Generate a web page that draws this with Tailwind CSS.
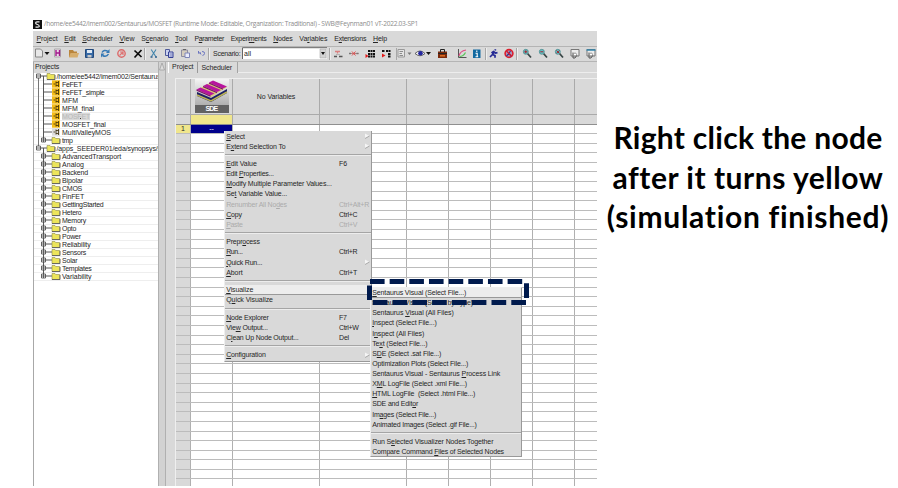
<!DOCTYPE html>
<html lang="en">
<head>
<meta charset="utf-8">
<title>Sentaurus Workbench</title>
<script src="https://cdn.jsdelivr.net/npm/@tailwindcss/browser@4"></script>
</head>
<body class="relative w-[898px] h-[488px] bg-white overflow-hidden font-['Liberation_Sans',Arial,sans-serif] text-[7px] leading-none text-[#262626]">
<div class="flex h-full pl-[33px] pt-[16px]">
  <section class="w-[564px] h-[470px] flex flex-col overflow-hidden shrink-0">
    <header class="h-[15px] flex items-center gap-[2px] pt-px shrink-0">
      <svg class="w-[9px] h-[9px]" viewBox="0 0 9 9"><rect width="9" height="9" fill="#111"/><path d="M6.500 1.800H4Q2.600 1.800 2.600 3t1.700 1.500T6.200 6 4.700 7.200H2.500" stroke="#eee" stroke-width="1.200" fill="none"/></svg>
      <span data-w="374" data-font="6.6px 'Open Sans'" class="font-['Open_Sans',sans-serif] text-[6.600px] text-[#8c8c8c]">/home/ee5442/imem002/Sentaurus/MOSFET (Runtime Mode: Editable, Organization: Traditional) - SWB@Feynman01 vT-2022.03-SP1</span>
    </header>
    <nav class="h-[15px] bg-[#d9d9d9] flex items-center pl-[3.500px] pb-px gap-[6.800px] shrink-0">
      <span data-w="21"><u>P</u>roject</span><span data-w="11"><u>E</u>dit</span><span data-w="30.5"><u>S</u>cheduler</span><span data-w="15"><u>V</u>iew</span><span data-w="27">S<u>c</u>enario</span><span data-w="12.500"><u>T</u>ool</span><span data-w="29.500">P<u>a</u>rameter</span><span data-w="35.700">Experi<u>m</u>ents</span><span data-w="19.300"><u>N</u>odes</span><span data-w="28">Va<u>r</u>iables</span><span data-w="32">E<u>x</u>tensions</span><span data-w="14"><u>H</u>elp</span>
    </nav>
    <div class="h-[15px] bg-[#d9d9d9] border-t border-[#b4b4b4] shrink-0">
      <svg class="block w-[564px] h-[14px]" viewBox="33 47 564 14" fill="none">
        <path d="M35.500 49h5l2 2v6h-7z" fill="#e8e8e8" stroke="#888"/><path d="M44.500 52h5l-2.500 3z" fill="#111"/>
        <path d="M54.500 49h6v8h-6z" fill="#eadbe8" stroke="#aaa"/><path d="M56 50v6M59.500 50v6M56 53h3.500" stroke="#a2188c" stroke-width="1.400"/>
        <path d="M69 50h4l1 1.500h3V57h-8z" fill="#b9853c"/><path d="M70.500 53H79l-1.500 4.500H69z" fill="#d6ad6c"/>
        <path d="M85.500 49.500h8v8h-8z" fill="#376aa6" stroke="#244a7c"/><path d="M87 50h5v3h-5z" fill="#dfe9f4"/><path d="M87.500 55h4v2.500h-4z" fill="#c8c8c8"/>
        <path d="M102 52.500q2-3.500 6-1.200M108.500 54q-2 3.500-6 1.500" stroke="#3478b5" stroke-width="1.500"/><path d="M109.500 49v4h-3.500zM101 57.500v-4h3.500z" fill="#3478b5"/>
        <circle cx="121.500" cy="53.500" r="3.700" stroke="#dc6a6a" stroke-width="1.400"/><path d="M119.500 55.500l4-4M120 52h3v3" stroke="#df7474" stroke-width="1.200"/>
        <path d="M134.500 50.500l7 6.500M141.500 50l-7 7.500" stroke="#0a0a0a" stroke-width="1.700"/>
        <path d="M151.200 49.500l4.500 7M156 49.500l-4.500 7" stroke="#4386ad" stroke-width="1.100"/><path d="M150.500 57h2M155 57h2" stroke="#2b5f8c" stroke-width="1.500"/>
        <path d="M165.500 49.500h4v6h-4z" fill="#c9d1ef" stroke="#4f5a9b"/><path d="M168.500 52h4.500v5.500h-4.500z" fill="#dfe3fa" stroke="#333f94"/><path d="M169.500 54h3M169.500 56h3" stroke="#333f94" stroke-width=".7"/>
        <path d="M181.500 50h6v6.500h-6z" fill="#d5cdbd" stroke="#8d8da2"/><path d="M183 49.500h3" stroke="#666"/><path d="M185 53h4.500v4.500H185z" fill="#eaecfb" stroke="#7e86b8"/>
        <path d="M198.500 53h2.500M198.500 51v2.500M200 52.500l1 2M202 51.500q3 0 2.500 2t-2 2" stroke="#6a74c0"/>
        <path d="M144.500 48v12M208.500 48v12M329.500 48v12M396.500 48v12M485.500 48v12M516.500 48v12" stroke="#a7a7a7"/>
        <path d="M145.500 48v12M209.500 48v12M330.500 48v12M486.500 48v12M517.500 48v12" stroke="#eee"/>
        <path d="M242 47.500h84.500V59H242z" fill="#fff"/><path d="M242.500 59V47.700H327" stroke="#666"/><path d="M320 49h6v9h-6z" fill="#d3d3d3" stroke="#aaa" stroke-width=".6"/><path d="M321 52h4l-2 3z" fill="#111"/>
        <path d="M335 51.500h5M337.500 51v2.500" stroke="#d98080" stroke-width="1.300"/><path d="M334 56.500h3M339 56.500h3.500" stroke="#555" stroke-width="1.400"/><path d="M336 54.500h4" stroke="#999" stroke-width=".6"/>
        <path d="M349 53.500h9.500" stroke="#b98181"/><path d="M352 51.500l3.500 4M355.500 51.500l-3.500 4" stroke="#dd4b4b"/><path d="M349 53.500h2M356.500 53.500h2" stroke="#777" stroke-width="1.500"/>
        <path d="M368 51h7M368 54h7M368 56.500h7" stroke="#111" stroke-width="2" stroke-dasharray="2 .5"/><path d="M365.500 54v4l3-2z" fill="#e31919"/>
        <path d="M382 51h3M386 51h5M388 54h3M388 56.500h3" stroke="#111" stroke-width="2" stroke-dasharray="2 .5"/><path d="M382 53.500v4l3.500-2z" fill="#e31919"/>
        <path d="M398 49.500h6.500v7.500H398z" fill="#e4e4e4" stroke="#999"/><path d="M399.500 51.500h3.500M399.500 53.500h2.500M399.500 55.500h3.500" stroke="#666" stroke-width=".7"/><path d="M407.500 52.500h4l-2 2.500z" fill="#777"/>
        <path d="M415 53.500q5-5 10 0-5 4.500-10 0z" fill="#eee" stroke="#444" stroke-width=".8"/><circle cx="420.500" cy="53.200" r="2.300" fill="#2427a0"/><path d="M426 52h5l-2.500 3z" fill="#111"/>
        <path d="M438 51.500h9v6.500h-9z" fill="#7b2a0c"/><path d="M440.500 52v-2.500h4V52" stroke="#222"/><path d="M438 53.500h9" stroke="#242424"/><path d="M440 55.800h5" stroke="#e06d20" stroke-width="1.500"/>
        <path d="M458.500 49v8.500h8" stroke="#555"/><path d="M459 56q1-5 7-6" stroke="#e04c85" stroke-width="1.200"/><path d="M459.500 56.500q4 0 6-4" stroke="#5bc45b" stroke-width="1.200"/>
        <path d="M473 49.500h7.500v8.500H473z" fill="#1269a0"/><path d="M476.800 50.500v1.500M475.500 53.300h1.700v3.500M475.500 56.700h2.700" stroke="#fff" stroke-width="1.100"/>
        <g stroke="#252a94" stroke-width="1.700"><path d="M495.500 49.300l-.3 1.200M494.500 51.500l-2 3 2.500 1v2.300M492.500 54.500l-2.500 2.500M491.500 53l2-1.500 2 1.500 2-.3"/></g>
        <circle cx="509" cy="53.500" r="3.900" fill="#a99bc0" stroke="#dc1e2d" stroke-width="1.600"/><path d="M510.500 51l-2 3 2 1v1.500M508.500 54l-2 2" stroke="#39368e" stroke-width="1.200"/><path d="M506.500 51l5 5" stroke="#d01832" stroke-width="1.400"/>
        <g stroke="#394747"><path d="M527.500 53.500l3.500 4M543.500 53.500l3.500 4M559.500 53.500l3.500 4" stroke-width="1.800"/><g fill="#5fc0c4" stroke-width=".8" stroke="#508d90"><circle cx="525.800" cy="51.800" r="2.500"/><circle cx="541.800" cy="51.800" r="2.500"/><circle cx="557.800" cy="51.800" r="2.500"/></g></g>
        <path d="M524.300 51.800h3M525.800 50.300v3M540.300 51.800h3M556.500 50.500l2.800 2.800M559.300 50.500l-2.800 2.800" stroke="#a8222f"/>
        <path d="M571 49.500h8v6.500h-8zM587 49.500h8v6.500h-8z" fill="#ececec" stroke="#777"/><path d="M586.500 50h9" stroke="#3184ab" stroke-width="1.500"/><path d="M573 52.500v5.500h2l2-3M589 52.500v5.500h2l2-3" stroke="#555"/><circle cx="575" cy="54.500" r="1.500" fill="#fff" stroke="#777" stroke-width=".7"/><circle cx="591" cy="54.500" r="1.500" fill="#fff" stroke="#777" stroke-width=".7"/>
      </svg>
      <div class="flex -mt-[11.500px] pl-[180px] gap-[3.500px] relative"><span data-w="27.500">Scenario:</span><span data-w="7">all</span></div>
    </div>
    <div class="h-px bg-[#b5b5b5] shrink-0"></div>
    <main class="flex flex-1 min-h-0 bg-[#d9d9d9]">
      <aside class="w-[125px] border-l border-[#a8a8a8] flex flex-col">
        <div class="h-[10.500px] shrink-0 flex items-center pl-px pb-px"><span data-w="24">Projects</span></div>
        <div id="tree" class="flex-1 bg-white overflow-hidden"></div>
      </aside>
      <div class="w-[8px] border-x border-[#b0b0b0] bg-[#d2d2d2]"><svg class="block w-[6px] h-[9px]" viewBox="0 0 6 9"><path d="M.5 8L3 1l2.500 7z" fill="#dedede" stroke="#999" stroke-width=".7"/></svg></div>
      <div class="flex-1 min-w-0 flex flex-col pl-[2px]">
        <div class="h-[11px] flex items-stretch shrink-0">
          <div class="w-[30px] border-r border-l border-l-white border-r-[#999] pl-[3px] pt-px"><span data-w="21.500">Project</span></div>
          <div class="w-[40px] border-r border-[#a4a4a4] pl-[3.500px] pt-[2px]"><span data-w="30.500">Scheduler</span></div>
          <div class="flex-1 border-b border-[#ededed]"></div>
        </div>
        <div class="flex-1 mt-[5px] ml-[7px] border-t border-l border-[#efefef] overflow-hidden">
          <div class="grid grid-cols-[15px_42px_87px_87px_42px_42px_42px_42px_42px] w-[441px] h-[36px] border-b border-[#aaa] *:border-r *:border-[#aaa]">
            <div></div>
            <div class="flex justify-center">
              <div class="w-[34px] h-[34px] bg-linear-to-b from-[#f4f4f4] to-[#9c9c9c] flex flex-col">
                <svg class="block w-[34px] h-[26px]" viewBox="0 0 34 26"><path d="M2 13l14 6 16-9v4l-16 9-14-6z" fill="#1c2064"/><path d="M2 11l16-9 14 6-16 10z" fill="#d8cf70"/><path d="M2 16l14 6 16-9" fill="none" stroke="#bdb455" stroke-width="1.500"/><path d="M1.500 10.500l4-2 14 6-4 2zM8 7l4-2 14 6-4 2zM14 3.500l4-2 14 6-4 2z" fill="#b8149f"/><path d="M1.500 10.500l14 6v1.200l-14-6zM8 7l14 6v1.200L8 8.200zM14 3.500l14 6v1.200L14 4.700z" fill="#7a1070"/></svg>
                <div class="h-[8px] bg-[#626262] text-white font-bold text-center leading-[8px]"><span data-w="12" data-font="bold 7px 'Liberation Sans'">SDE</span></div>
              </div>
            </div>
            <div class="flex items-center justify-center"><span data-w="38.500">No Variables</span></div>
            <div></div><div></div><div></div><div></div><div></div><div></div>
          </div>
          <div class="grid grid-cols-[15px_42px_87px_87px_42px_42px_42px_42px_42px] w-[441px] h-[9.500px] border-b border-[#8f8f8f] *:border-r *:border-[#aaa]">
            <div></div><div class="bg-[#f0e68c]"></div><div></div><div></div><div></div><div></div><div></div><div></div><div></div>
          </div>
          <div id="rows"></div>
        </div>
      </div>
    </main>
  </section>
  <section class="flex-1 pt-[102px] pl-[1px] text-center text-black font-bold font-['Lato',sans-serif] text-[30px] leading-[39.700px]">
    <p><span data-w="269" data-font="bold 30px Lato">Right click the node</span></p>
    <p><span data-w="271.500" data-font="bold 30px Lato">after it turns yellow</span></p>
    <p><span data-w="282.500" data-font="bold 30px Lato">(simulation finished)</span></p>
  </section>
</div>

<div id="menu" class="absolute left-[224px] top-[131px] w-[147.500px] h-[230.500px] bg-[#d9d9d9] border border-t-0 border-l-[#eee] border-r-[#999] border-b-[#999]"></div>
<div id="submenu" class="absolute left-[370px] top-[286.500px] w-[152px] h-[170.500px] bg-[#d9d9d9] border border-l-[#eee] border-t-[#eee] border-r-[#999] border-b-[#999]"></div>
<svg id="dashes" class="absolute left-[360px] top-[270px] w-[180px] h-[40px]" viewBox="360 270 180 40">
  <path d="M370 281.500h152.200" stroke="#001a4d" stroke-width="5" stroke-dasharray="14.600 5.060"/>
  <path d="M372.700 302.500h153.500" stroke="#001a4d" stroke-width="5" stroke-dasharray="14.700 5.100"/>
  <path d="M526.500 283.300v14.700M369.500 285.500v14.500" stroke="#001a4d" stroke-width="5"/>
</svg>

<script>
const tree = [
  ['root', '/home/ee5442/imem002/Sentaurus', 104],
  ['proj', 'FeFET', 20], ['proj', 'FeFET_simple', 42.5], ['proj', 'MFM', 16.3], ['proj', 'MFM_final', 32],
  ['sel', 'MOSFET', 28], ['proj', 'MOSFET_final', 43.5], ['idle', 'MultiValleyMOS', 49], ['dir', 'tmp', 10.5],
  ['root', '/apps_SEEDER01/eda/synopsys/s', 104.5],
  ['dir', 'AdvancedTransport', 59], ['dir', 'Analog', 22], ['dir', 'Backend', 26], ['dir', 'Bipolar', 21],
  ['dir', 'CMOS', 20], ['dir', 'FinFET', 22], ['dir', 'GettingStarted', 41.5], ['dir', 'Hetero', 19.5],
  ['dir', 'Memory', 24], ['dir', 'Opto', 14], ['dir', 'Power', 19], ['dir', 'Reliability', 28.5],
  ['dir', 'Sensors', 24], ['dir', 'Solar', 15.5], ['dir', 'Templates', 29.5], ['dir', 'Variability', 29.5],
];
const box = (x, plus) => `<path d="M${x - 2} 2h4v4h-4zM${x - 2} 4h4${plus ? `M${x} 2v4` : ''}" fill="#fff" stroke="#444" stroke-width=".8"/>`;
const folder = x => `<path d="M${x} 1.500h3l.7 1h4v5h-7.700z" fill="#ece55a" stroke="#8d8948" stroke-width=".6"/><path d="M${x} 7.500h8V3" fill="none" stroke="#555" stroke-width=".8"/>`;
document.getElementById('tree').innerHTML = tree.map(([kind, text, w], i) => {
  const root = kind === 'root', first = i < 9;
  let art = '';
  if (root) art = '<path d="M6 4h7M9.500 4v4" stroke="#555"/>' + (i < 9 ? '<path d="M4.500 5v3" stroke="#777"/>' : '<path d="M4.500 0v3" stroke="#777"/>') + box(4.5, false) + folder(13);
  else {
    if (first) art += '<path d="M4.500 0v8" stroke="#777"/>';
    art += `<path d="M9.500 0v${i === 8 || i === 25 ? 4 : 8}M10 4h8" stroke="#555"/>`;
    if (kind === 'dir') art += box(9.5, true) + folder(18);
    else art += `<rect x="18" y="0.300" width="8" height="7.400" fill="${kind === 'idle' ? '#ddd' : '#f5bd18'}"/><path d="M22 1.500v5M22 2.500h2.500M22 5.500h2.500M19.500 4h1.500M24.500 1v6" stroke="#3a2c08" stroke-width=".8" fill="none"/>`;
  }
  const tone = kind === 'sel' ? 'bg-[#d9d9d9] text-[#b8b8b8]' : '';
  const dot = kind === 'sel' ? '<i class="w-px h-px bg-[#333] -ml-[10px] mt-[4px]"></i>' : '';
  return `<div class="flex items-center h-[8px] border-b border-[#eee] whitespace-nowrap"><svg class="shrink-0 h-[8px] ${root ? 'w-[22.500px]' : 'w-[28px]'}" viewBox="0 0 ${root ? 22.5 : 28} 8">${art}</svg><span class="${tone}" data-w="${w}">${text}</span>${dot}</div>`;
}).join('');

document.getElementById('rows').innerHTML = Array.from({ length: 38 }, (_, i) =>
  `<div class="grid grid-cols-[15px_42px_87px_87px_42px_42px_42px_42px_42px] w-[441px] h-[9.600px] bg-white border-b border-[#bcbcbc] text-center leading-[8.500px] *:border-r *:border-[#b0b0b0]">
  <div class="${i ? 'bg-[#d9d9d9]' : 'bg-[#f0e68c]'}">${i ? '' : '1'}</div><div class="${i ? '' : 'bg-[#00008b] text-white'}">${i ? '' : '--'}</div>${'<div></div>'.repeat(7)}</div>`).join('');

const menu = [
  ['<u>S</u>elect', 18.7, '>'], ['E<u>x</u>tend Selection To', 59.5, '>'], null,
  ['<u>E</u>dit Value', 30.5, 'F6', 8], ['Edit <u>P</u>roperties...', 47.5], ['<u>M</u>odify Multiple Parameter Values...', 105.5],
  ['Se<u>t</u> Variable Value...', 61], ['Renumber All No<u>d</u>es', 61, 'Ctrl+Alt+R', 30, 'off'], ['<u>C</u>opy', 15.7, 'Ctrl+C', 18.3],
  ['<u>P</u>aste', 16.3, 'Ctrl+V', 18.3, 'off'], null,
  ['Prepr<u>o</u>cess', 33.5], ['<u>R</u>un...', 16.3, 'Ctrl+R', 18.3], ['<u>Q</u>uick Run...', 36, '>'], ['<u>A</u>bort', 16.3, 'Ctrl+T', 18], null,
  ['<u>V</u>isualize', 27, '', 0, 'hot'], ['Q<u>u</u>ick Visualize', 46.7], null,
  ['<u>N</u>ode Explorer', 42.5, 'F7', 7.7], ['Vie<u>w</u> Output...', 41.6, 'Ctrl+W', 19.5], ['C<u>l</u>ean Up Node Output...', 72.3, 'Del', 10], null,
  ['<u>C</u>onfiguration', 39.5, '>'],
];
const submenu = [
  ['<u>S</u>entaurus Visual (Select File...)', 94, '', 0, 'hot'], ['Sentaurus Visual (Select by Type)', 101],
  ['Sentaurus <u>V</u>isual (All Files)', 81.5], ['<u>I</u>nspect (Select File...)', 64.5], ['I<u>n</u>spect (All Files)', 52],
  ['Te<u>x</u>t (Select File...)', 55.3], ['S<u>D</u>E (Select .sat File...)', 69], ['Optimization Plots (Select File...)', 96],
  ['Sentaurus Visual - Sentaurus <u>P</u>rocess Link', 128], ['X<u>M</u>L LogFile (Select .xml File...)', 95],
  ['<u>H</u>TML LogFile&nbsp; (Select .html File...)', 103.3], ['SDE and Edit<u>o</u>r', 46], ['Im<u>a</u>ges (Select File...)', 64],
  ['Animated Images (Select .gif File...)', 104.5], null,
  ['Run S<u>e</u>lected Visualizer Nodes Together', 121.3], ['Compare Command <u>F</u>iles of Selected Nodes', 131.7],
];
const draw = items => items.map(it => {
  if (!it) return '<div class="h-[7.300px] pt-[3px]"><div class="h-[2px] border-t border-t-[#a5a5a5] bg-[#ededed]"></div></div>';
  const [label, w, extra = '', ew = 0, state = ''] = it;
  const tone = state === 'off' ? 'text-[#ababab]' : state === 'hot' ? 'bg-[#ededed] border-b border-[#999]' : '';
  const right = extra === '>'
    ? '<svg class="w-[6px] h-[6px] ml-auto mr-px" viewBox="0 0 6 6"><path d="M1 .5v5L5.500 3z" fill="#f5f5f5"/><path d="M1 5.500L5.500 3" stroke="#999" stroke-width=".8"/></svg>'
    : extra ? `<span class="w-[31.500px] ml-auto"><span data-w="${ew}">${extra}</span></span>` : '';
  return `<div class="h-[10.130px] flex items-center pl-[1.200px] whitespace-nowrap ${tone}"><span data-w="${w}">${label}</span>${right}</div>`;
}).join('');
document.getElementById('menu').innerHTML = draw(menu);
document.getElementById('submenu').innerHTML = draw(submenu);

// Track each label so that it fills its nominal width.
const pen = document.createElement('canvas').getContext('2d');
document.querySelectorAll('[data-w]').forEach(el => {
  pen.font = el.dataset.font || "7px 'Liberation Sans'";
  const text = el.textContent;
  el.style.whiteSpace = 'nowrap';
  el.style.letterSpacing = (parseFloat(el.dataset.w) - pen.measureText(text).width) / text.length + 'px';
});
</script>
</body>
</html>
